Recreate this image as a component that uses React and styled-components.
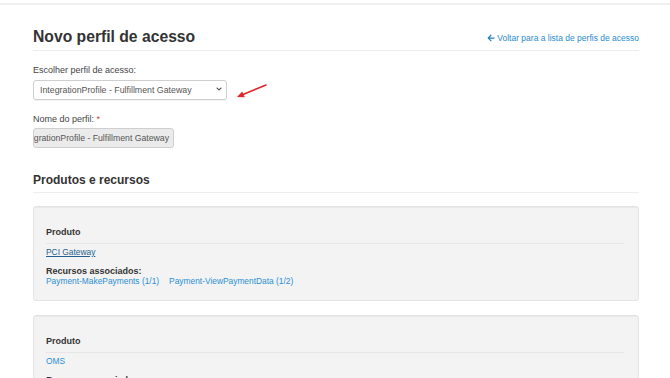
import React from 'react';
import styled, { createGlobalStyle } from 'styled-components';
import { FaArrowLeft, FaChevronDown } from 'react-icons/fa';

const GlobalStyle = createGlobalStyle`
body{
  margin:0;
  background:#fff;
  font-family:"Liberation Sans", Arial, sans-serif;
  color:#333;
}
`

const produtos = [
  { nome: 'PCI Gateway', visitado: true, recursos: ['Payment-MakePayments (1/1)', 'Payment-ViewPaymentData (1/2)'] },
  { nome: 'OMS', visitado: false, recursos: ['Order-View (1/1)'] },
];

function App () {
  return (
    <>
      <GlobalStyle />
      <TopLine />
      <Page>
        <Header>
          <Title>Novo perfil de acesso</Title>
          <BackLink href="#">
            <FaArrowLeft size={8} />
            Voltar para a lista de perfis de acesso
          </BackLink>
        </Header>

        <FormGroup>
          <Label>Escolher perfil de acesso:</Label>
          <SelectRow>
            <SelectWrap>
              <Select defaultValue="fg">
                <option value="fg">IntegrationProfile - Fulfillment Gateway</option>
              </Select>
              <Chevron><FaChevronDown size={6} /></Chevron>
            </SelectWrap>
            <RedArrow width="32" height="16" viewBox="0 0 32 16">
              <line x1="30" y1="2" x2="7" y2="11.4" stroke="#e0262b" strokeWidth="1.6" strokeLinecap="round" />
              <polygon points="1,14 8.8,14.2 6.2,8.4" fill="#e0262b" />
            </RedArrow>
          </SelectRow>
        </FormGroup>

        <FormGroup>
          <Label>Nome do perfil: <Required>*</Required></Label>
          <DisabledInput><span>IntegrationProfile - Fulfillment Gateway</span></DisabledInput>
        </FormGroup>

        <SectionTitle>Produtos e recursos</SectionTitle>

        {produtos.map((p, index) =>
          <Well key={index}>
            <Head>Produto</Head>
            <ProductLink href="#" visited={p.visitado}>{p.nome}</ProductLink>
            <SubHead>Recursos associados:</SubHead>
            <Resources>
              {p.recursos.map((r, i) => <ResLink key={i} href="#">{r}</ResLink>)}
            </Resources>
          </Well>
        )}
      </Page>
    </>
  )
}

export default App;

const TopLine = styled.div`
margin-top:3px;
height:2px;
background:#efefef;
`
const Page = styled.div`
padding:0 31px 40px 33px;
`
const Header = styled.div`
display:flex;
justify-content:space-between;
align-items:baseline;
padding-top:22px;
padding-bottom:3px;
border-bottom:1px solid #ececec;
`
const Title = styled.h1`
margin:0;
font-size:15.7px;
line-height:20px;
font-weight:700;
color:#333;
`
const BackLink = styled.a`
display:flex;
align-items:center;
gap:2px;
font-size:8.5px;
color:#2a8bd0;
text-decoration:none;
svg{ color:#1f7fc4; }
`
const FormGroup = styled.div`
margin-top:13px;
display:flex;
flex-direction:column;
align-items:flex-start;
`
const Label = styled.label`
font-size:9px;
line-height:12px;
color:#444;
margin-bottom:3px;
`
const Required = styled.span`
color:#d9383a;
`
const SelectRow = styled.div`
display:flex;
align-items:center;
`
const SelectWrap = styled.div`
position:relative;
`
const Select = styled.select`
appearance:none;
width:194px;
height:20px;
padding:0 16px 0 6px;
border:1px solid #cfcfcf;
border-radius:3px;
background:#fff;
font-family:"Liberation Sans", Arial, sans-serif;
font-size:8.8px;
color:#555;
box-shadow:0 1px 1px rgba(0,0,0,.06);
`
const Chevron = styled.span`
position:absolute;
right:5px;
top:7px;
color:#444;
display:flex;
`
const RedArrow = styled.svg`
margin-left:9px;
margin-top:2px;
`
const DisabledInput = styled.div`
box-sizing:border-box;
width:141px;
height:20px;
display:flex;
align-items:center;
justify-content:flex-end;
overflow:hidden;
white-space:nowrap;
padding-right:4px;
border:1px solid #cfcfcf;
border-radius:3px;
background:#ebebeb;
font-size:8.7px;
color:#555;
`
const SectionTitle = styled.h3`
margin:25px 0 0;
padding-bottom:4px;
border-bottom:1px solid #ededed;
font-size:12px;
line-height:15px;
font-weight:700;
color:#333;
`
const Well = styled.div`
margin-top:13px;
padding:19px 14px 13px 12px;
background:#f3f3f3;
border:1px solid #e3e3e3;
border-radius:3px;
box-shadow:inset 0 1px 1px rgba(0,0,0,.04);
font-size:9px;
& + &{ margin-top:14px; }
`
const Head = styled.div`
font-size:9px;
line-height:12px;
font-weight:700;
color:#333;
padding-bottom:5px;
border-bottom:1px solid #e6e6e6;
`
const ProductLink = styled.a`
display:block;
width:fit-content;
margin-top:2px;
font-size:8.4px;
line-height:12px;
color:${props => props.visited ? '#245f8f' : '#2a8fd4'};
text-decoration:${props => props.visited ? 'underline' : 'none'};
`
const SubHead = styled.div`
margin-top:8px;
font-size:9px;
line-height:10px;
font-weight:700;
color:#333;
`
const Resources = styled.div`
display:flex;
gap:10px;
`
const ResLink = styled.a`
font-size:8.4px;
line-height:11px;
color:#2a8fd4;
text-decoration:none;
`
